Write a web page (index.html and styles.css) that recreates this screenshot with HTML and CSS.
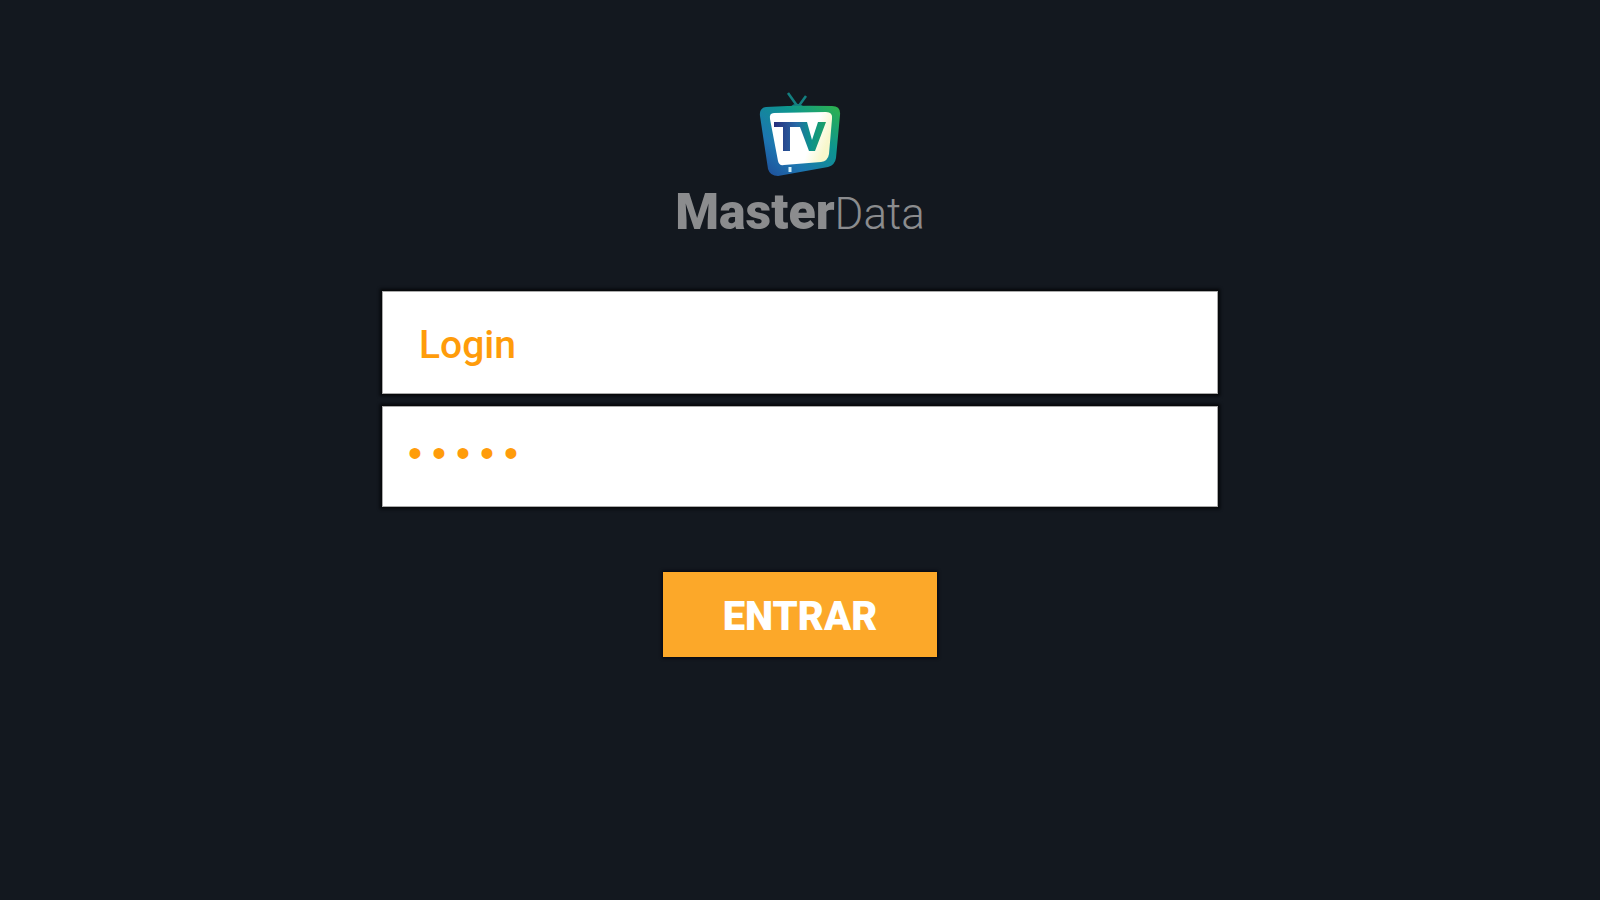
FILE: index.html
```html
<!DOCTYPE html>
<html lang="pt-BR">
<head>
<meta charset="utf-8">
<meta name="viewport" content="width=device-width, initial-scale=1">
<title>TV MasterData</title>
<link rel="stylesheet" href="styles.css">
</head>
<body>
<main class="page">
  <header class="brand">
    <svg class="brand-icon" viewBox="0 0 84 84" role="img" aria-label="TV">
      <defs>
        <linearGradient id="frame" x1="0" y1="1" x2="1" y2="0">
          <stop offset="0" stop-color="#1f4796"/>
          <stop offset="0.3" stop-color="#1d75b0"/>
          <stop offset="0.65" stop-color="#0d958f"/>
          <stop offset="1" stop-color="#2fb34a"/>
        </linearGradient>
        <linearGradient id="glass" x1="0" y1="0" x2="1" y2="0.3">
          <stop offset="0.75" stop-color="#ffffff"/>
          <stop offset="1" stop-color="#f8f7cc"/>
        </linearGradient>
        <linearGradient id="letters" gradientUnits="userSpaceOnUse" x1="16" y1="0" x2="72" y2="0">
          <stop offset="0" stop-color="#272f7d"/>
          <stop offset="0.4" stop-color="#2868a6"/>
          <stop offset="0.65" stop-color="#0b928c"/>
          <stop offset="1" stop-color="#23a45b"/>
        </linearGradient>
      </defs>
      <path d="M30 1 40 15 48 4" fill="none" stroke="#137f80" stroke-width="2.5"/>
      <path d="M32 15Q38 9 45 14Z" fill="#137f80"/>
      <path d="M8 15Q40 13 74 14Q83 14 82 23L78 66Q77 73 70 75L20 84Q12 84 10 77L2 24Q1 16 8 15Z" fill="url(#frame)"/>
      <path d="M16 21 68 20Q75 20 74 27L71 62Q70 69 63 70L26 73Q21 74 20 69L12 27Q11 21 16 21Z" fill="url(#glass)"/>
      <path d="M16 30H49L54 48 60 30H68L57 59H51L42 35H32V59H25V35H16Z" fill="url(#letters)"/>
      <path d="M32 75V80" stroke="#d5f2fc" stroke-width="3"/>
    </svg>
    <h1 class="brand-name"><span class="brand-strong">Master</span><span class="brand-light">Data</span></h1>
  </header>
  <form class="login">
    <input class="field" type="text" aria-label="Login" placeholder="Login" autocomplete="off">
    <input class="field field-password" type="password" aria-label="Senha" value="12345" autocomplete="off">
    <button class="submit" type="button">ENTRAR</button>
  </form>
</main>
</body>
</html>
```
FILE: styles.css
```css
* {
  box-sizing: border-box;
}

body {
  margin: 0;
  min-height: 100vh;
  background: #13181f;
  font-family: Roboto, sans-serif;
}

.page {
  display: flex;
  flex-direction: column;
  align-items: center;
  padding: 92px 24px;
}

.brand {
  display: flex;
  flex-direction: column;
  align-items: center;
}

.brand-icon {
  width: 84px;
  height: 84px;
}

.brand-name {
  display: flex;
  align-items: baseline;
  margin: 8px 0 0;
  line-height: 56px;
  color: #8b8c8e;
}

.brand-strong {
  font-size: 50px;
  font-weight: 900;
}

.brand-light {
  font-size: 44px;
  font-weight: 300;
}

.login {
  display: flex;
  flex-direction: column;
  align-items: center;
  width: 100%;
  max-width: 836px;
  margin-top: 49px;
}

.field {
  width: 100%;
  height: 103px;
  padding: 4px 36px 0;
  border: 1px solid #aaaaaa;
  border-radius: 0;
  outline: 0;
  background: #ffffff;
  box-shadow: 0 0 3px 2px #050608;
  color: #ff9c0a;
  font-family: Roboto, sans-serif;
  font-size: 39px;
  font-weight: 500;
}

.field::placeholder {
  color: #ff9c0a;
  opacity: 1;
}

.field-password {
  height: 101px;
  margin-top: 12px;
  padding: 0 20px;
  font-family: "Liberation Mono", monospace;
  font-size: 40px;
}

.submit {
  width: 274px;
  height: 85px;
  margin-top: 65px;
  padding: 4px 0 0;
  border: 0;
  background: #fca829;
  box-shadow: 0 0 3px 1px #04050f;
  color: #ffffff;
  font-family: Roboto, sans-serif;
  font-size: 40px;
  font-weight: 900;
}
```
